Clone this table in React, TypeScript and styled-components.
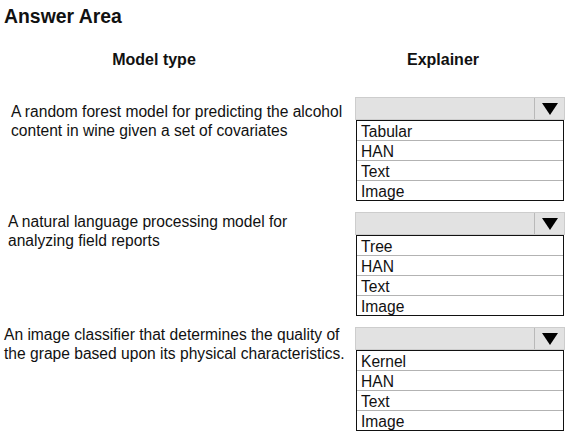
import React from "react";
import styled, { createGlobalStyle } from "styled-components";

const Global = createGlobalStyle`
  html, body { margin: 0; padding: 0; background: #ffffff; }
  body { font-family: "Liberation Sans", Arial, sans-serif; color: #111111; }
`;

const Page = styled.div`
  width: 568px;
  height: 432px;
  overflow: hidden;
  display: flex;
  flex-direction: column;
`;

const Title = styled.h1`
  margin: 0;
  padding: 5px 0 0 4px;
  font-size: 19.4px;
  line-height: 22px;
  font-weight: 700;
`;

const HeaderRow = styled.div`
  display: flex;
  margin-top: 23px;
`;

const ColumnHead = styled.div<{ $w: number; $ml?: number }>`
  width: ${(p) => p.$w}px;
  margin-left: ${(p) => p.$ml ?? 0}px;
  text-align: center;
  font-size: 16px;
  line-height: 20px;
  font-weight: 700;
`;

const Rows = styled.div`
  display: flex;
  flex-direction: column;
  gap: 11px;
  margin-top: 27px;
`;

const Row = styled.div`
  display: flex;
  align-items: flex-start;
`;

const Statement = styled.div<{ $pl: number; $mt: number }>`
  width: 355px;
  box-sizing: border-box;
  padding-left: ${(p) => p.$pl}px;
  margin-top: ${(p) => p.$mt}px;
  font-size: 15.6px;
  line-height: 18.5px;
  white-space: nowrap;
`;

const Dropdown = styled.div`
  width: 210px;
  display: flex;
  flex-direction: column;
`;

const SelectBar = styled.div`
  height: 23px;
  box-sizing: border-box;
  display: flex;
  background: #e2e2e2;
  border: 1px solid #cdcdcd;
`;

const SelectValue = styled.div`
  flex: 1;
`;

const ArrowCell = styled.div`
  width: 29px;
  border-left: 1px solid #b9b9b9;
  display: flex;
  align-items: center;
  justify-content: center;
`;

const OptionList = styled.ul`
  list-style: none;
  margin: 0 0 0 1px;
  padding: 0;
  width: 208px;
  box-sizing: border-box;
  border: 1px solid #111111;
`;

const Option = styled.li`
  height: 19px;
  box-sizing: border-box;
  padding: 2px 0 0 4px;
  font-size: 15.6px;
  line-height: 17px;
  border-top: 1px solid #b3b3b3;
  &:first-child {
    border-top: none;
    height: 19px;
  }
  & + & {
    height: 20px;
  }
`;

const Arrow = () => (
  <svg width="16" height="12" viewBox="0 0 16 12">
    <polygon points="0,0 16,0 8,12" fill="#000" />
  </svg>
);

const rows = [
  {
    text: ["A random forest model for predicting the alcohol", "content in wine given a set of covariates"],
    pl: 11,
    mt: 6,
    options: ["Tabular", "HAN", "Text", "Image"],
  },
  {
    text: ["A natural language processing model for", "analyzing field reports"],
    pl: 8,
    mt: 1,
    options: ["Tree", "HAN", "Text", "Image"],
  },
  {
    text: ["An image classifier that determines the quality of", "the grape based upon its physical characteristics."],
    pl: 4,
    mt: -1,
    options: ["Kernel", "HAN", "Text", "Image"],
  },
];

export default function App() {
  return (
    <Page>
      <Global />
      <Title>Answer Area</Title>
      <HeaderRow>
        <ColumnHead $w={308}>Model type</ColumnHead>
        <ColumnHead $w={176} $ml={47}>Explainer</ColumnHead>
      </HeaderRow>
      <Rows>
        {rows.map((r, i) => (
          <Row key={i}>
            <Statement $pl={r.pl} $mt={r.mt}>
              {r.text[0]}
              <br />
              {r.text[1]}
            </Statement>
            <Dropdown>
              <SelectBar>
                <SelectValue />
                <ArrowCell>
                  <Arrow />
                </ArrowCell>
              </SelectBar>
              <OptionList>
                {r.options.map((o) => (
                  <Option key={o}>{o}</Option>
                ))}
              </OptionList>
            </Dropdown>
          </Row>
        ))}
      </Rows>
    </Page>
  );
}
